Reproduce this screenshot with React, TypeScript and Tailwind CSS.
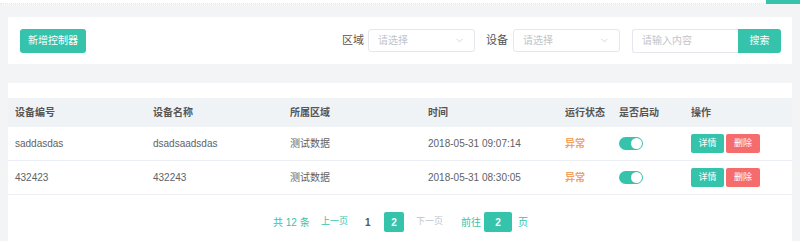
import { ChevronDown } from "lucide-react";

type Row = { id: string; name: string; area: string; time: string };

const rows: Row[] = [
  { id: "saddasdas", name: "dsadsaadsdas", area: "测试数据", time: "2018-05-31 09:07:14" },
  { id: "432423", name: "432243", area: "测试数据", time: "2018-05-31 08:30:05" },
];

const cols = "grid grid-cols-[138px_137px_138px_137px_54px_72px_108px]";
const font = { fontFamily: '"Liberation Sans", "Noto Sans CJK SC", sans-serif' };

function Select() {
  return (
    <div className="w-[107px] h-[23px] border border-[#e4e7ed] rounded-[3px] flex items-center justify-between px-[9px] bg-white">
      <span className="text-[10px] text-[#c0c4cc]">请选择</span>
      <ChevronDown className="w-[11px] h-[11px] text-[#c0c4cc]" strokeWidth={1.5} />
    </div>
  );
}

export default function App() {
  return (
    <div className="w-[800px] h-[241px] bg-[#f3f4f6] overflow-hidden text-[#606266]" style={font}>
      <div className="h-[4px] bg-white flex justify-end border-b border-dotted border-[#e6e6e6]">
        <div className="w-[34px] h-[4px] bg-[#35c3ab]" />
      </div>

      {/* filter bar */}
      <div className="mx-2 mt-[13px] h-[47px] bg-white flex items-center justify-between pl-3 pr-[11px]">
        <button className="h-[24px] w-[66px] rounded-[3px] bg-[#35c3ab] text-white text-[10px]">新增控制器</button>
        <div className="flex items-center">
          <span className="text-[11px] text-[#555] mr-[4px]">区域</span>
          <Select />
          <span className="text-[11px] text-[#555] ml-[11px] mr-[5px]">设备</span>
          <Select />
          <div className="ml-[12px] flex">
            <div className="w-[106px] h-[24px] border border-[#e4e7ed] border-r-0 rounded-l-[3px] flex items-center px-[9px]">
              <span className="text-[10px] text-[#c0c4cc]">请输入内容</span>
            </div>
            <button className="w-[43px] h-[24px] bg-[#35c3ab] text-white text-[10px] rounded-r-[3px]">搜索</button>
          </div>
        </div>
      </div>

      {/* table */}
      <div className="mx-2 mt-[19px] bg-white pt-[15px] h-[200px]">
        <div className={`${cols} h-[29px] items-center bg-[#f0f3f5] text-[10px] font-bold text-[#555]`}>
          <div className="pl-[7px]">设备编号</div>
          <div className="pl-[7px]">设备名称</div>
          <div className="pl-[7px]">所属区域</div>
          <div className="pl-[7px]">时间</div>
          <div className="pl-[7px]">运行状态</div>
          <div className="pl-[7px]">是否启动</div>
          <div className="pl-[7px]">操作</div>
        </div>
        {rows.map((r) => (
          <div key={r.id} className={`${cols} h-[34px] items-center border-b border-[#ebeef5] text-[10px]`}>
            <div className="pl-[7px]">{r.id}</div>
            <div className="pl-[7px]">{r.name}</div>
            <div className="pl-[7px]">{r.area}</div>
            <div className="pl-[7px]">{r.time}</div>
            <div className="pl-[7px] text-[#f5a05e] font-bold">异常</div>
            <div className="pl-[7px]">
              <div className="w-[24px] h-[13px] rounded-full bg-[#35c3ab] flex items-center justify-end pr-[1px]">
                <div className="w-[11px] h-[11px] rounded-full bg-white" />
              </div>
            </div>
            <div className="pl-[7px] flex gap-[2px]">
              <button className="w-[33px] h-[19px] rounded-[2px] bg-[#35c3ab] text-white text-[9px]">详情</button>
              <button className="w-[34px] h-[19px] rounded-[2px] bg-[#f56c6c] text-white text-[9px]">删除</button>
            </div>
          </div>
        ))}

        {/* pagination */}
        <div className="flex items-center mt-[17px] text-[10px] pl-[265px]">
          <span className="text-[#35c3ab] w-[48px]">共 12 条</span>
          <span className="text-[#35c3ab] text-[9px] w-[44px]">上一页</span>
          <span className="text-[#555] font-bold w-[19px]">1</span>
          <span className="w-[20px] h-[20px] rounded-[2px] bg-[#35c3ab] text-white font-bold flex items-center justify-center mr-[12px]">2</span>
          <span className="text-[#c0c4cc] text-[9px] w-[45px]">下一页</span>
          <span className="text-[#35c3ab] w-[23px]">前往</span>
          <span className="w-[28px] h-[20px] rounded-[2px] bg-[#35c3ab] text-white font-bold flex items-center justify-center mr-[6px]">2</span>
          <span className="text-[#35c3ab]">页</span>
        </div>
      </div>
    </div>
  );
}
